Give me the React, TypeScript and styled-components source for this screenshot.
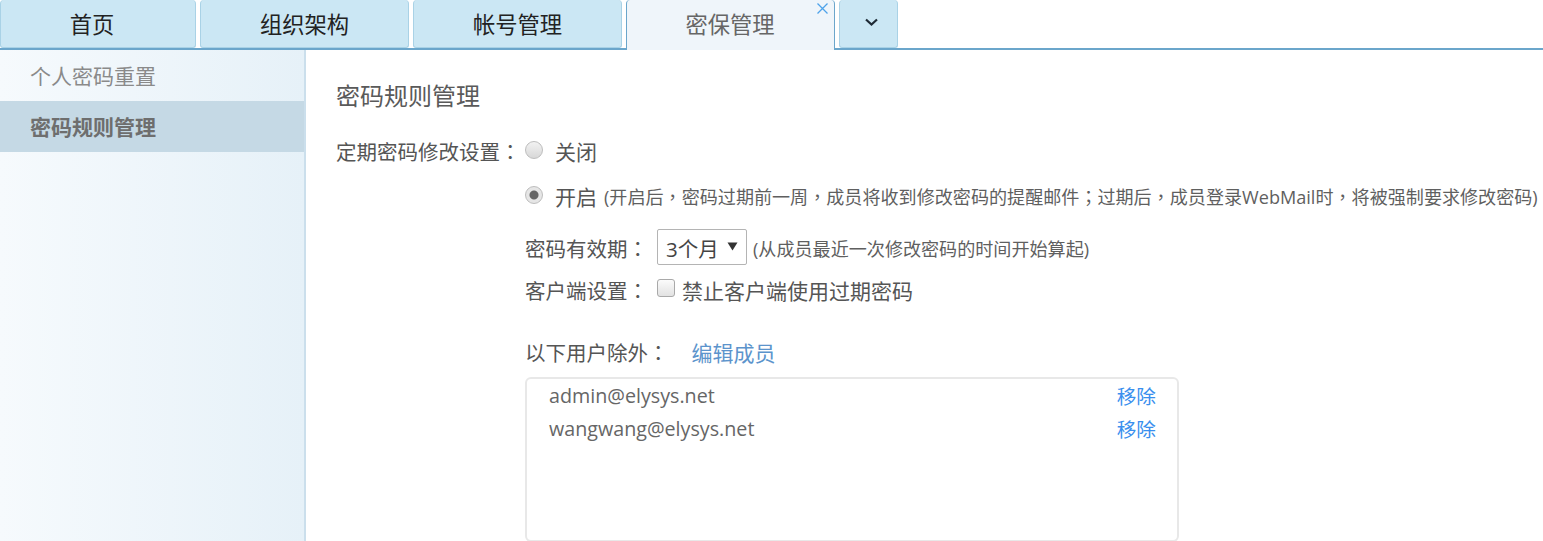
import React from "react";
import styled, { createGlobalStyle } from "styled-components";

const Global = createGlobalStyle`
  html, body { margin: 0; padding: 0; background: #fff; overflow: hidden; }
  body { font-family: "Open Sans", "Noto Sans CJK SC", sans-serif; color: #555; }
  * { box-sizing: border-box; }
`;

const Page = styled.div`
  width: 1543px;
  height: 541px;
  overflow: hidden;
  display: flex;
  flex-direction: column;
`;

const TabBar = styled.div`
  height: 50px;
  flex: none;
  display: flex;
  gap: 4px;
  align-items: stretch;
  border-bottom: 2px solid #6ba6cb;
`;

const Tab = styled.div<{ $w: number; $active?: boolean; $pr?: number; $pl?: number }>`
  width: ${(p) => p.$w}px;
  height: ${(p) => (p.$active ? 50 : 48)}px;
  display: flex;
  align-items: center;
  justify-content: center;
  position: relative;
  font-size: 22.3px;
  padding: 0 ${(p) => p.$pr ?? 0}px ${(p) => (p.$active ? 3 : 1)}px ${(p) => p.$pl ?? 0}px;
  color: ${(p) => (p.$active ? "#666" : "#222")};
  background: ${(p) => (p.$active ? "#eff5fa" : "#cbe7f4")};
  border: 1px solid ${(p) => (p.$active ? "#6ba6cb" : "#a9d2e6")};
  border-top: none;
  border-bottom: ${(p) => (p.$active ? "none" : "1px solid #a9d2e6")};
  border-radius: 4px 4px ${(p) => (p.$active ? "0 0" : "3px 3px")};
`;

const CloseIcon = styled.svg`
  position: absolute;
  top: 2px;
  right: 5px;
  width: 13px;
  height: 13px;
`;

const Chevron = styled.svg`
  width: 15px;
  height: 10px;
  margin-bottom: 2px;
`;

const Body = styled.div`
  flex: 1;
  display: flex;
  min-height: 0;
`;

const Sidebar = styled.div`
  width: 306px;
  flex: none;
  background: linear-gradient(90deg, #f6fafd 0%, #e6f1f8 100%);
  border-right: 2px solid #cbdfec;
`;

const SideItem = styled.div<{ $active?: boolean }>`
  height: 51px;
  display: flex;
  align-items: center;
  padding: 0 0 2px 30px;
  font-size: 21px;
  font-weight: ${(p) => (p.$active ? 700 : 400)};
  color: ${(p) => (p.$active ? "#6e6e6e" : "#8a8a8a")};
  background: ${(p) => (p.$active ? "#c5d9e5" : "transparent")};
`;

const Main = styled.div`
  flex: 1;
  padding: 29px 0 0 30px;
  white-space: nowrap;
`;

const Title = styled.div`
  font-size: 24px;
  line-height: 34px;
  color: #5a5a5a;
  margin-bottom: 23px;
`;

const Row = styled.div`
  display: flex;
  align-items: center;
  font-size: 21px;
  color: #555;
`;

const FirstLabel = styled.span`
  width: 189px;
  font-size: 20.5px;
  flex: none;
`;

const Indented = styled.div<{ $h: number; $mt?: number }>`
  display: flex;
  align-items: center;
  height: ${(p) => p.$h}px;
  margin-top: ${(p) => p.$mt ?? 0}px;
  margin-left: 189px;
  font-size: 20.5px;
  color: #555;
`;

const Punct = styled.span`
  font-family: "Noto Sans CJK TC", sans-serif;
`;

const Radio = styled.span<{ $on?: boolean }>`
  width: 18px;
  height: 18px;
  border-radius: 50%;
  flex: none;
  margin-right: 12px;
  position: relative;
  top: -1px;
  border: 1px solid #bdbdbd;
  background: ${(p) =>
    p.$on
      ? "radial-gradient(circle, #666 0 4px, #e6e6e6 5px)"
      : "linear-gradient(#f2f2f2, #d8d8d8)"};
`;

const OptionText = styled.span`
  font-size: 21px;
`;

const Note = styled.span<{ $ml?: number; $pt?: number }>`
  font-size: 18.08px;
  margin-left: ${(p) => p.$ml ?? 0}px;
  padding-top: ${(p) => p.$pt ?? 0}px;
  color: #5f5f5f;
`;

const Label = styled.span<{ $w: number; $pt?: number }>`
  width: ${(p) => p.$w}px;
  padding-top: ${(p) => p.$pt ?? 0}px;
  flex: none;
`;

const SelectBox = styled.div`
  width: 90px;
  height: 36px;
  flex: none;
  display: flex;
  align-items: center;
  justify-content: space-between;
  padding: 2px 8px 0;
  border: 1px solid #b4b4b4;
  border-radius: 2px;
  background: #fff;
  color: #444;
`;

const Caret = styled.svg`
  width: 11px;
  height: 9px;
  position: relative;
  top: -2px;
`;

const Check = styled.span`
  width: 18px;
  height: 18px;
  flex: none;
  margin-right: 7px;
  position: relative;
  top: -2px;
  border: 1px solid #a9a9a9;
  border-radius: 3px;
  background: linear-gradient(#fbfbfb, #e2e2e2);
`;

const Link = styled.span`
  color: #5c94cc;
  margin-left: 23px;
  font-size: 21px;
`;

const ListBox = styled.div`
  margin: 10px 0 0 189px;
  width: 654px;
  height: 165px;
  border: 2px solid #e8e8e8;
  border-radius: 6px;
  padding: 0 21px 0 22px;
`;

const ListRow = styled.div`
  height: 33px;
  display: flex;
  align-items: center;
  justify-content: space-between;
  font-size: 19.7px;
  color: #666;
`;

const Remove = styled.span`
  color: #3a8fee;
  font-size: 19.7px;
`;

export default function App() {
  return (
    <Page>
      <Global />
      <TabBar>
        <Tab $w={196} $pr={12}>首页</Tab>
        <Tab $w={209}>组织架构</Tab>
        <Tab $w={209}>帐号管理</Tab>
        <Tab $w={209} $active $pr={1}>
          密保管理
          <CloseIcon viewBox="0 0 13 13">
            <path d="M1.5 1.5 11.5 11.5M11.5 1.5 1.5 11.5" stroke="#4ea3ea" strokeWidth="1.3" fill="none" />
          </CloseIcon>
        </Tab>
        <Tab $w={59} $pl={6}>
          <Chevron viewBox="0 0 15 10">
            <path d="M2 2.5 7.5 7.5l5.5-5" stroke="#1e2a35" strokeWidth="2.2" fill="none" />
          </Chevron>
        </Tab>
      </TabBar>
      <Body>
        <Sidebar>
          <SideItem>个人密码重置</SideItem>
          <SideItem $active>密码规则管理</SideItem>
        </Sidebar>
        <Main>
          <Title>密码规则管理</Title>
          <Row>
            <FirstLabel>定期密码修改设置<Punct>：</Punct></FirstLabel>
            <Radio />
            关闭
          </Row>
          <Indented $h={28} $mt={16}>
            <Radio $on />
            <OptionText>开启</OptionText>
            <Note $ml={7}>(开启后<Punct>，</Punct>密码过期前一周<Punct>，</Punct>成员将收到修改密码的提醒邮件<Punct>；</Punct>过期后<Punct>，</Punct>成员登录WebMail时<Punct>，</Punct>将被强制要求修改密码)</Note>
          </Indented>
          <Indented $h={36} $mt={19}>
            <Label $w={132} $pt={2}>密码有效期<Punct>：</Punct></Label>
            <SelectBox>
              3个月
              <Caret viewBox="0 0 11 9">
                <path d="M0.5 0.5h10L5.5 8.5z" fill="#333" />
              </Caret>
            </SelectBox>
            <Note $ml={6} $pt={2}>(从成员最近一次修改密码的时间开始算起)</Note>
          </Indented>
          <Indented $h={30} $mt={10}>
            <Label $w={132}>客户端设置<Punct>：</Punct></Label>
            <Check />
            <OptionText>禁止客户端使用过期密码</OptionText>
          </Indented>
          <Indented $h={30} $mt={32}>
            以下用户除外<Punct>：</Punct>
            <Link>编辑成员</Link>
          </Indented>
          <ListBox>
            <ListRow>
              admin@elysys.net
              <Remove>移除</Remove>
            </ListRow>
            <ListRow>
              wangwang@elysys.net
              <Remove>移除</Remove>
            </ListRow>
          </ListBox>
        </Main>
      </Body>
    </Page>
  );
}
